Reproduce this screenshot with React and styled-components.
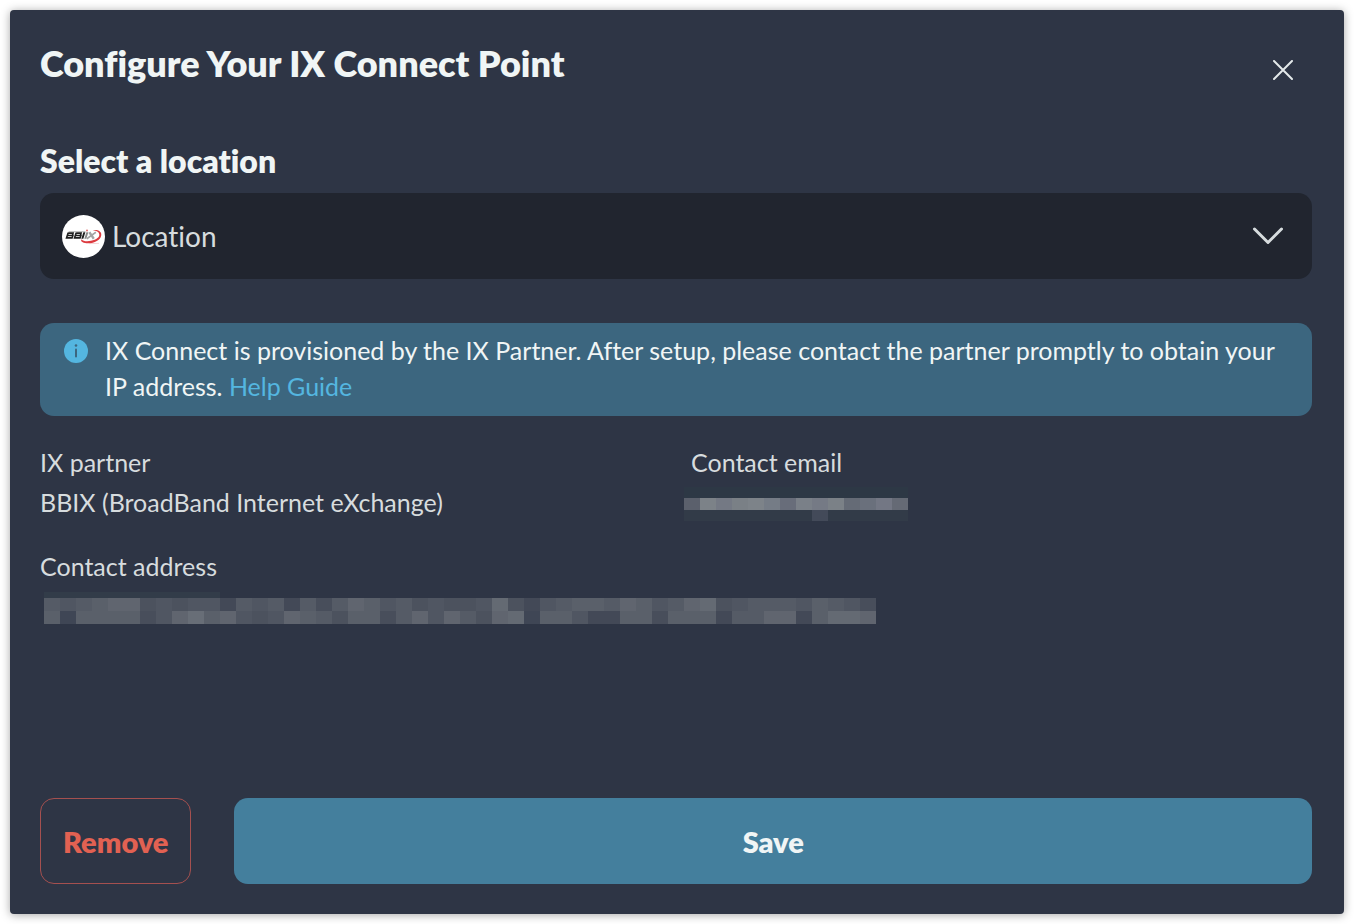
import styled, { createGlobalStyle } from "styled-components";

const emailTones = [
  "#5b606c", "#7c8288", "#747984", "#7a8086", "#7d8389", "#757c86", "#686d7a",
  "#7a8088", "#757a85", "#7b8187", "#656b76", "#6a707c", "#737784", "#656a75",
];

const addressRows = [
  "5456773434415451525764534334831456657645783455546542",
  "6066662479674347653662574753780664116626661557716887",
];

const addressTones = [
  "#3f4655", "#434957", "#484e5b", "#4c525e", "#505662",
  "#555b66", "#5a606a", "#60656f", "#646a73", "#686e77",
];

const HiddenEmail = () => (
  <Mosaic role="img" aria-label="Hidden contact email" height="40">
    <rect x="-7" y="5" width="224" height="11" fill="#2d3845" />
    <rect x="-7" y="28" width="224" height="11" fill="#323b48" />
    <rect x="121" y="28" width="16" height="11" fill="#434a59" />
    {emailTones.map((tone, i) => (
      <rect key={i} x={i * 16 - 7} y="16" width="16" height="12" fill={tone} />
    ))}
  </Mosaic>
);

const HiddenAddress = () => (
  <Mosaic role="img" aria-label="Hidden contact address" height="40">
    <rect x="4" y="6" width="176" height="6" fill="#323c49" />
    {addressRows.map((row, r) =>
      [...row].map((tone, i) => (
        <rect
          key={`${r}-${i}`}
          x={i * 16 + 4}
          y={r * 13 + 12}
          width="16"
          height="13"
          fill={addressTones[tone]}
        />
      ))
    )}
  </Mosaic>
);

const PartnerLogo = () => (
  <Logo viewBox="0 0 43 43" aria-hidden="true">
    <circle cx="21.5" cy="21.5" r="21.5" fill="#fff" />
    <path
      d="M31 15.2C36 14.6 40 16.5 39.2 20.5C38.400 25.500 31 29 24.5 28.2C20.5 27.8 18 26 19.6 24.2C21 26.2 25 26.8 29 25.8C34.5 24.6 38 22 37.2 19C36.900 16.8 34.500 15.600 31 15.200Z"
      fill="#dc3a3f"
    />
    <path d="M27 28.600L37 28.400" stroke="#f2b8ba" strokeWidth="0.600" />
    <g transform="skewX(-18)">
      <path d="M12 16.600H29" stroke="#999" strokeWidth="0.600" />
      <g fill="none" stroke="#1f1f1f" strokeWidth="1.700">
        <path d="M12 18.200H17V20.500H12.500H17.500V22.900H12V17.600" />
        <path d="M20 18.200H25V20.500H20.500H25.500V22.900H20V17.600" />
        <path d="M28 17.300V23.700" strokeWidth="2" />
      </g>
      <path d="M31 17.300V23.700" stroke="#888" strokeWidth="2" />
      <path d="M33 17.300L39.500 23.700M39.500 17.300L32.500 23.700" stroke="#a4a4a4" strokeWidth="2" />
    </g>
    <circle cx="25" cy="15.600" r="1" fill="#dc6a6d" />
  </Logo>
);

const App = () => {
  return (
    <>
      <GlobalStyle />
      <Panel>
        <Header>
          <Title>Configure Your IX Connect Point</Title>
          <CloseButton type="button" aria-label="Close">
            <svg width="20" height="20" viewBox="0 0 20 20" aria-hidden="true">
              <path d="M1 1L19 19M19 1L1 19" />
            </svg>
          </CloseButton>
        </Header>

        <FieldLabel htmlFor="location">Select a location</FieldLabel>
        <SelectBox>
          <PartnerLogo />
          <Select id="location" defaultValue="location">
            <option value="location">Location</option>
          </Select>
          <Chevron viewBox="0 0 32 20" aria-hidden="true">
            <path d="M2.500 3L16 16.500L29.500 3" />
          </Chevron>
        </SelectBox>

        <Notice>
          <InfoIcon viewBox="0 0 24 24" aria-hidden="true">
            <circle cx="12" cy="12" r="12" fill="#54b6e0" />
            <circle cx="12" cy="6.500" r="1.300" fill="#3c667f" />
            <rect x="11" y="9.500" width="2" height="9" rx="1" fill="#3c667f" />
          </InfoIcon>
          <NoticeText>
            IX Connect is provisioned by the IX Partner. After setup, please
            contact the partner promptly to obtain your IP address.{" "}
            <HelpLink href="#help">Help Guide</HelpLink>
          </NoticeText>
        </Notice>

        <Details>
          <Detail>
            <dt>IX partner</dt>
            <dd>BBIX (BroadBand Internet eXchange)</dd>
          </Detail>
          <Detail>
            <dt>Contact email</dt>
            <dd>
              <HiddenEmail />
            </dd>
          </Detail>
          <Detail $wide>
            <dt>Contact address</dt>
            <dd>
              <HiddenAddress />
            </dd>
          </Detail>
        </Details>

        <Actions>
          <RemoveButton type="button">Remove</RemoveButton>
          <SaveButton type="button">Save</SaveButton>
        </Actions>
      </Panel>
    </>
  );
};

const GlobalStyle = createGlobalStyle`
  * {
    box-sizing: border-box;
  }
  body {
    margin: 0;
    background-color: #fff;
    font-family: Lato, "Open Sans", sans-serif;
    font-variant-ligatures: none;
  }
  button,
  select {
    font-family: inherit;
    font-variant-ligatures: none;
    cursor: pointer;
  }
`;

const Panel = styled.main`
  display: flex;
  flex-direction: column;
  min-height: calc(100vh - 20px);
  margin: 10px;
  padding: 30px 32px 30px 30px;
  border-radius: 4px;
  background-color: #2e3545;
  box-shadow: 0 1px 10px rgba(0, 0, 0, 0.35);
`;

const Header = styled.header`
  display: flex;
  align-items: flex-start;
  justify-content: space-between;
  margin-bottom: 53px;
`;

const Title = styled.h1`
  margin: 0;
  font-size: 36px;
  font-weight: 800;
  line-height: 46px;
  color: #f0f5f5;
`;

const CloseButton = styled.button`
  display: flex;
  margin: 12px 11px 0 0;
  padding: 8px;
  border: 0;
  background: none;
  path {
    fill: none;
    stroke: #e4e9ea;
    stroke-width: 2;
    stroke-linecap: round;
  }
`;

const FieldLabel = styled.label`
  margin-bottom: 12px;
  font-size: 32px;
  font-weight: 800;
  line-height: 40px;
  color: #f0f5f5;
`;

const SelectBox = styled.div`
  display: flex;
  align-items: center;
  height: 86px;
  margin-bottom: 44px;
  padding: 0 28px 0 22px;
  border-radius: 14px;
  background-color: #21252f;
`;

const Logo = styled.svg`
  flex: none;
  width: 43px;
  height: 43px;
`;

const Select = styled.select`
  flex: 1;
  height: 100%;
  padding: 0 7px;
  border: 0;
  outline: 0;
  appearance: none;
  background: none;
  font-size: 28px;
  color: #d7dcde;
`;

const Chevron = styled.svg`
  width: 32px;
  height: 20px;
  pointer-events: none;
  path {
    fill: none;
    stroke: #d7dcde;
    stroke-width: 3;
    stroke-linecap: round;
    stroke-linejoin: round;
  }
`;

const Notice = styled.section`
  display: flex;
  gap: 17px;
  margin-bottom: 26px;
  padding: 9px 24px 12px;
  border-radius: 14px;
  background-color: #3c667f;
`;

const InfoIcon = styled.svg`
  flex: none;
  width: 24px;
  height: 24px;
  margin-top: 7px;
`;

const NoticeText = styled.p`
  margin: 0;
  font-size: 25px;
  line-height: 36px;
  color: #f0f5f5;
`;

const HelpLink = styled.a`
  color: #54b6e0;
  text-decoration: none;
`;

const Details = styled.dl`
  display: grid;
  grid-template-columns: 1fr 1fr;
  gap: 24px 30px;
  margin: 0 0 40px;
  font-size: 25px;
  line-height: 40px;
  color: #d7dcde;
`;

const Detail = styled.div`
  min-width: 0;
  grid-column: ${({ $wide }) => ($wide ? "1 / -1" : "auto")};
  dd {
    margin: 0;
  }
`;

const Mosaic = styled.svg`
  display: block;
  width: 100%;
  overflow: visible;
`;

const Actions = styled.footer`
  display: flex;
  gap: 43px;
  margin-top: auto;
`;

const ActionButton = styled.button`
  height: 86px;
  padding: 0 22px;
  border-radius: 14px;
  font-size: 29px;
  font-weight: 800;
`;

const RemoveButton = styled(ActionButton)`
  border: 1px solid #a5504f;
  background: none;
  color: #e26152;
`;

const SaveButton = styled(ActionButton)`
  flex: 1;
  border: 0;
  background-color: #447f9d;
  color: #f0f5f5;
`;

export default App;
